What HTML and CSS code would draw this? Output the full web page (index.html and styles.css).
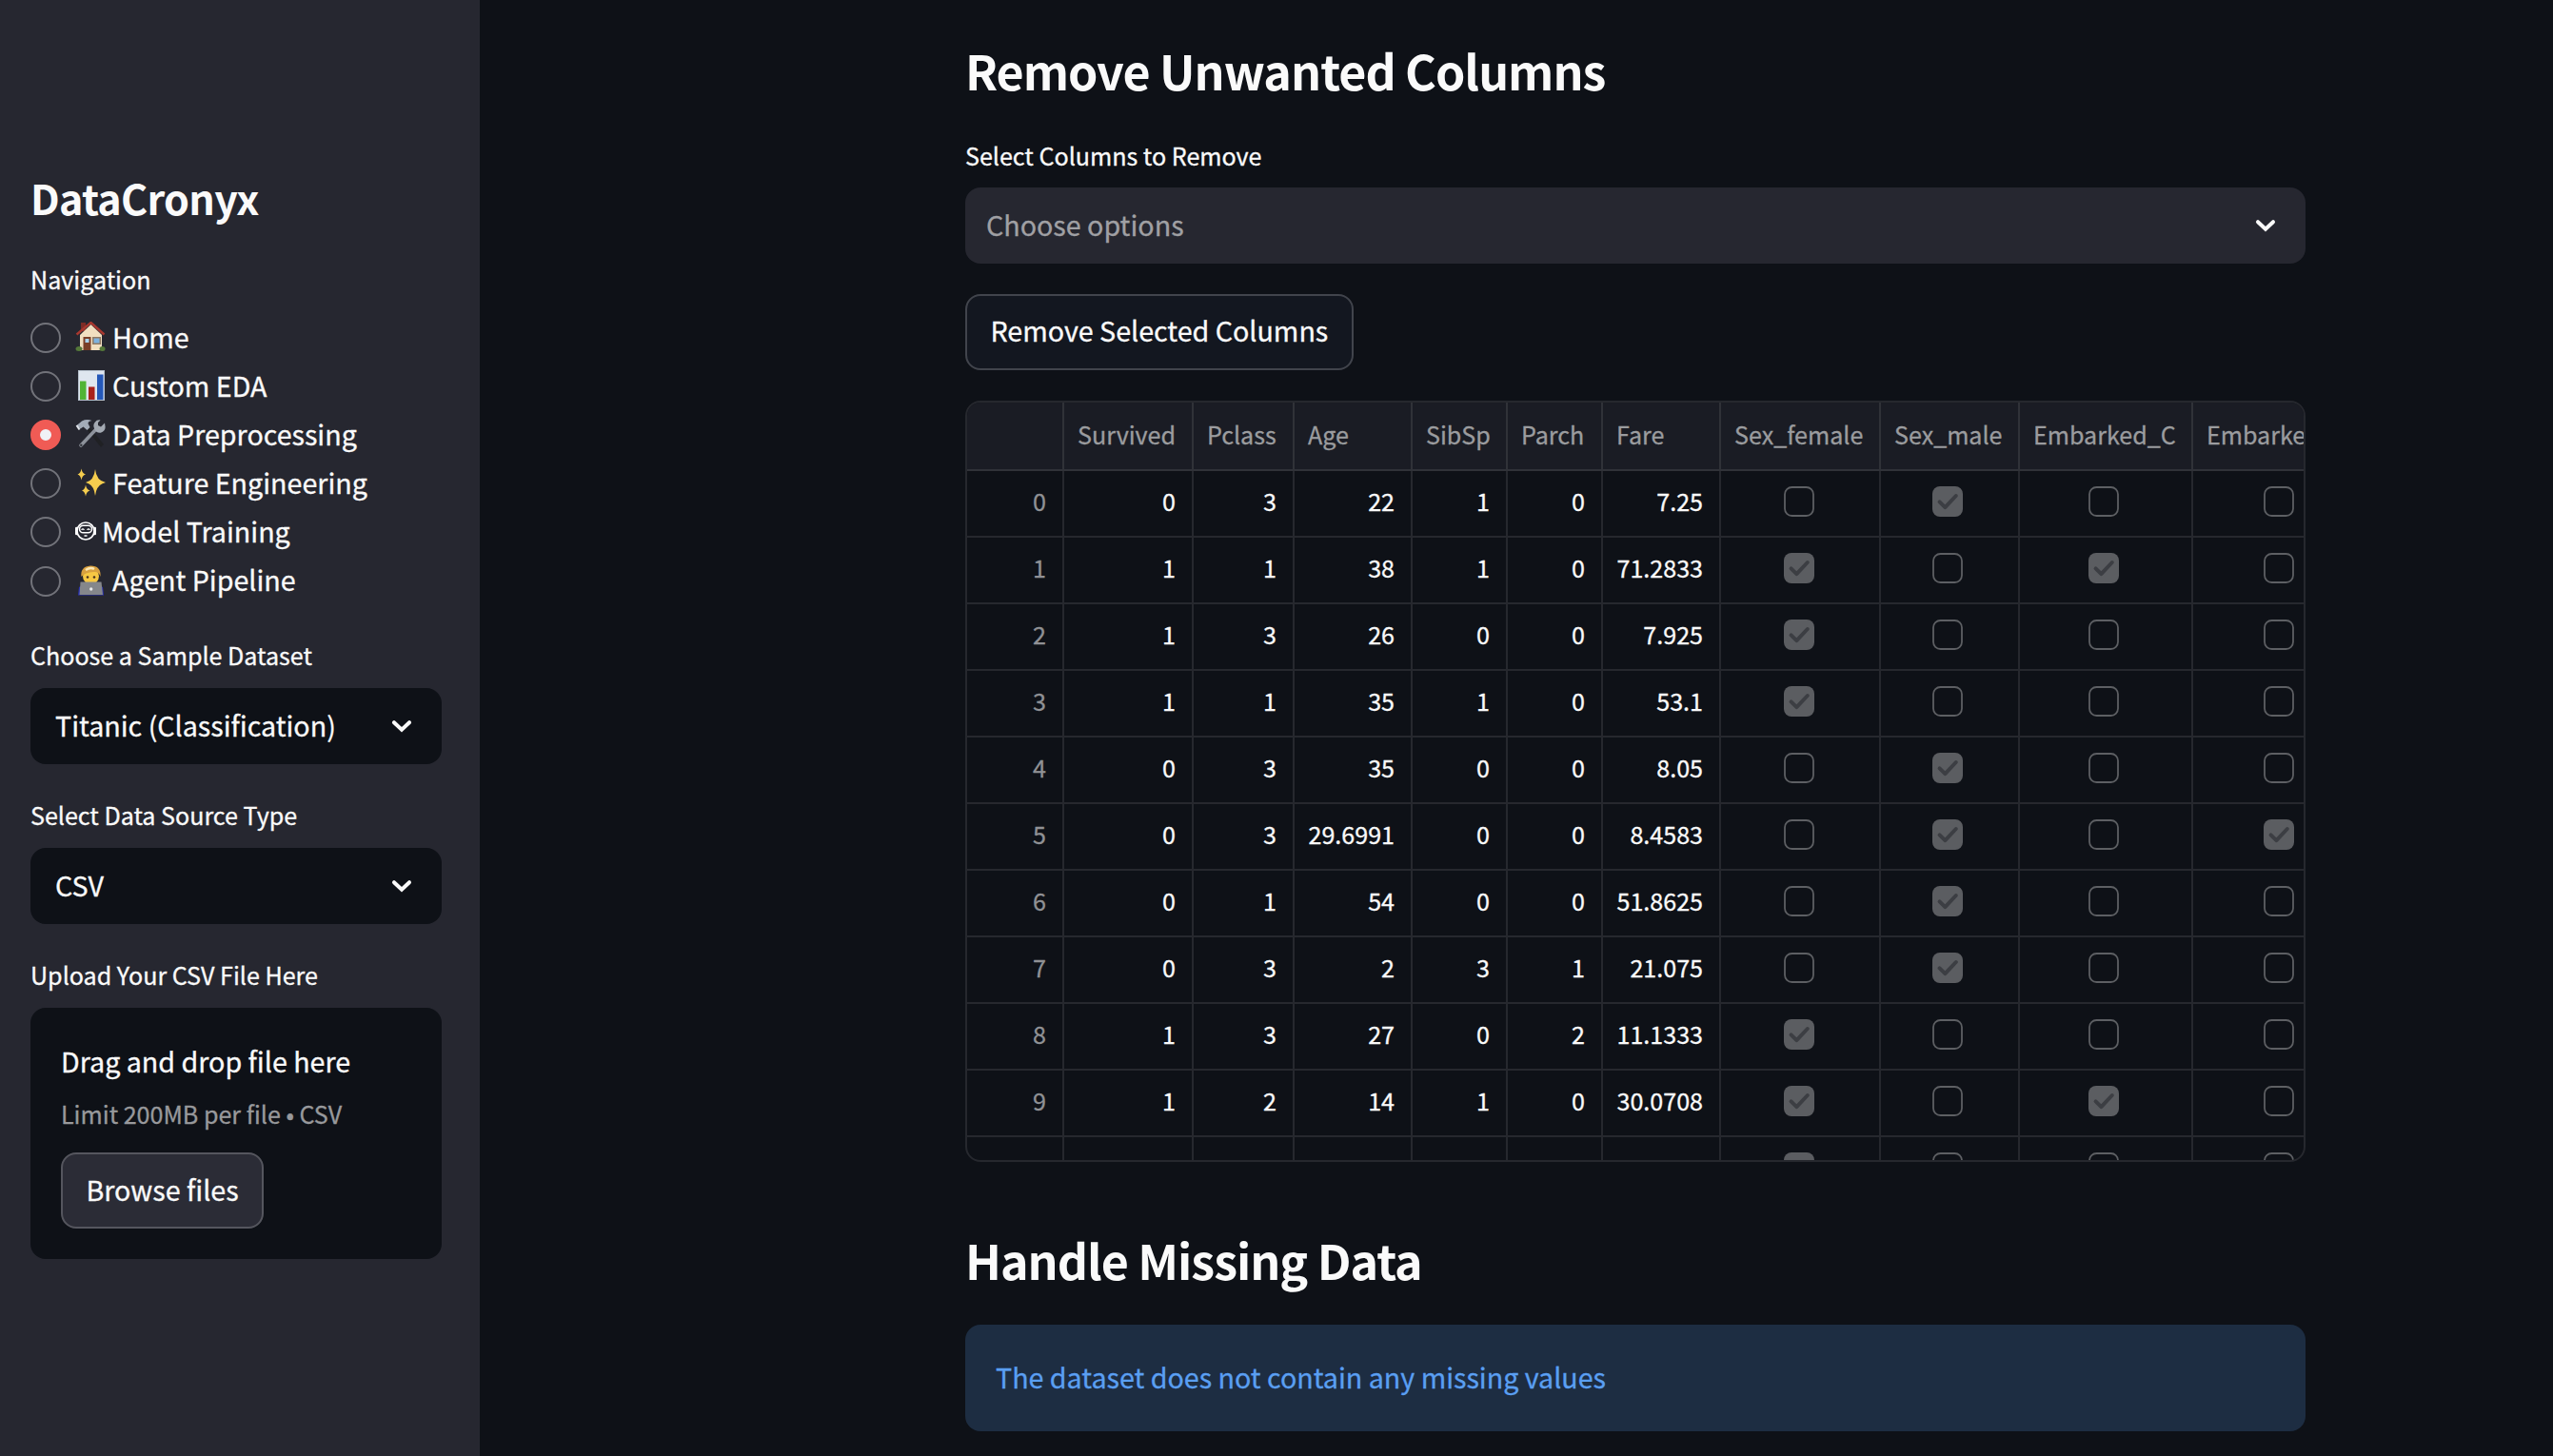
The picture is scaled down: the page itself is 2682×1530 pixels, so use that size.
FILE: index.html
```html
<!DOCTYPE html>
<html lang="en">
<head>
<meta charset="utf-8">
<title>DataCronyx</title>
<link rel="stylesheet" href="styles.css">
</head>
<body>
<svg class="sprite" aria-hidden="true">
  <symbol id="on" viewBox="0 0 32 32"><rect width="32" height="32" rx="8" fill="#5b5d61"/><path d="M7.6 16.4l5.8 5.7L24.8 10" fill="none" stroke="#3c3e43" stroke-width="4" stroke-linecap="round" stroke-linejoin="round"/></symbol>
  <symbol id="off" viewBox="0 0 32 32"><rect x="1" y="1" width="30" height="30" rx="7.5" fill="none" stroke="#5d5f63" stroke-width="1.8"/></symbol>
  <symbol id="chevron" viewBox="0 0 24 16"><path d="M4 4.2l8 7.6 8-7.6" fill="none" stroke="#fafafa" stroke-width="4" stroke-linecap="round"/></symbol>
</svg>
<div class="app">
  <aside class="sidebar">
    <h1 class="brand">DataCronyx</h1>
    <p class="label first">Navigation</p>
    <ul class="nav">
      <li><i class="radio"></i>
        <svg class="emoji" viewBox="0 0 32 32"><path d="M6 1h5v9H6z" fill="#7d2c26"/><path d="M5 14L16.500 3 28 14v16H5z" fill="#f1dfc0"/><path d="M1.500 13.500L16.500 1 30.500 13.500" fill="none" stroke="#a8382f" stroke-width="2.400"/><path d="M8.500 16h8v14h-8z" fill="#7a3f27"/><path d="M10.500 18h4v4h-4z" fill="#a9d4ef"/><path d="M18 16h9v8h-9z" fill="#917a62"/><path d="M19.500 17.500h6v5h-6z" fill="#7db2df"/><ellipse cx="4" cy="28.500" rx="3.500" ry="2.500" fill="#55783a"/><ellipse cx="28.500" cy="28.500" rx="3" ry="2.500" fill="#55783a"/></svg>
        <span>Home</span></li>
      <li><i class="radio"></i>
        <svg class="emoji" viewBox="0 0 32 32"><path d="M3 0h28v32H3z" fill="#b6c0cc"/><path d="M4 1h26v30H4z" fill="#dfe6ef"/><path d="M5 11.500h6.500V31H5z" fill="#51b435"/><path d="M14 17.500h6.500V31H14z" fill="#a9211b"/><path d="M23 4.500h6.500V31H23z" fill="#2558b8"/></svg>
        <span>Custom EDA</span></li>
      <li><i class="radio on"></i>
        <svg class="emoji" viewBox="0 0 32 32"><path d="M12 11l15 19 3-3L15 9z" fill="#202124"/><path d="M6 28L22 11" stroke="#8d929b" stroke-width="3.600" stroke-linecap="round"/><circle cx="6.300" cy="27.700" r="1.200" fill="#33353b"/><path d="M26.500 1.500a6 6 0 0 0-6.500 8.500 5.700 5.700 0 0 0 11.500-2l-.5-3.500-4 4-3-1.500 0-3z" fill="#a3a9b2"/><path d="M1 7.500L7 2.500Q12 0 17.500 2q-4 .5-4 3l2 4-3 3-4-3.500-3 2z" fill="#a2abb8"/><path d="M1.500 7l3 4.500" stroke="#dfe3e8" stroke-width="2"/></svg>
        <span>Data Preprocessing</span></li>
      <li><i class="radio"></i>
        <svg class="emoji" viewBox="0 0 32 32"><path d="M21 2Q22.200 14 32 16 22.200 18 21 30 19.800 18 11 16 19.800 14 21 2z" fill="#f5cd4e"/><path d="M6.500 1.500q.8 5 4.500 6-3.700 1-4.500 6-.8-5-4-6 3.200-1 4-6z" fill="#f5cd4e"/><path d="M11 18.500q.8 5 4.500 6-3.700 1-4.500 6-.8-5-4-6 3.200-1 4-6z" fill="#f5cd4e"/></svg>
        <span>Feature Engineering</span></li>
      <li><i class="radio"></i>
        <svg class="emoji small" viewBox="0 0 22 22"><circle cx="11" cy="11" r="9" fill="none" stroke="#fff" stroke-width="1.700"/><path d="M1.200 8v6M20.800 8v6" stroke="#fff" stroke-width="2.400" stroke-linecap="round"/><rect x="4.500" y="5.200" width="13" height="7.600" rx="3.800" fill="none" stroke="#fff" stroke-width="1.500"/><path d="M6.600 9.800q1.400-2 2.800 0M12.600 9.800q1.400-2 2.800 0" fill="none" stroke="#fff" stroke-width="1.300"/><path d="M9.500 16h3" stroke="#fff" stroke-width="1.500"/></svg>
        <span>Model Training</span></li>
      <li><i class="radio"></i>
        <svg class="emoji" viewBox="0 0 32 32"><path d="M3 31.500l1-8.500 5-3h14l6 3 1 8.500z" fill="#2a33b4"/><circle cx="16.500" cy="11.500" r="8.500" fill="#f7c843"/><path d="M6.500 12Q5 1.500 16 .5 27.500.5 26.500 12q-1.500-5.500-7-5Q10 7.500 6.500 12z" fill="#d9a13f"/><path d="M11 5q5-3.500 9-1" stroke="#fbe7b3" stroke-width="2.500" fill="none"/><circle cx="13" cy="12.500" r="1.300" fill="#46301c"/><circle cx="20" cy="12.500" r="1.300" fill="#46301c"/><path d="M5.500 17.500h22L29 31H4.500z" fill="#85878b"/><circle cx="16.700" cy="25" r="1.700" fill="#e8e9ea"/></svg>
        <span>Agent Pipeline</span></li>
    </ul>
    <p class="label after-nav">Choose a Sample Dataset</p>
    <div class="select"><span>Titanic (Classification)</span><svg class="chevron"><use href="#chevron"/></svg></div>
    <p class="label">Select Data Source Type</p>
    <div class="select"><span>CSV</span><svg class="chevron"><use href="#chevron"/></svg></div>
    <p class="label">Upload Your CSV File Here</p>
    <div class="dropzone">
      <p>Drag and drop file here</p>
      <p class="drop-limit">Limit 200MB per file • CSV</p>
      <button class="button browse">Browse files</button>
    </div>
  </aside>
  <main class="main">
    <h2 class="heading">Remove Unwanted Columns</h2>
    <p class="label">Select Columns to Remove</p>
    <div class="select multi"><span>Choose options</span><svg class="chevron"><use href="#chevron"/></svg></div>
    <button class="button remove">Remove Selected Columns</button>
    <div class="frame">
      <table class="data">
        <colgroup><col class="w102"><col class="w136"><col class="w106"><col class="w124"><col class="w100"><col class="w100"><col class="w124"><col class="w168"><col class="w146"><col class="w182"><col class="w186"></colgroup>
        <thead><tr><th></th><th>Survived</th><th>Pclass</th><th>Age</th><th>SibSp</th><th>Parch</th><th>Fare</th><th>Sex_female</th><th>Sex_male</th><th>Embarked_C</th><th>Embarked_Q</th></tr></thead>
        <tbody>
        <tr><td>0</td><td>0</td><td>3</td><td>22</td><td>1</td><td>0</td><td>7.25</td><td><svg><use href="#off"/></svg></td><td><svg><use href="#on"/></svg></td><td><svg><use href="#off"/></svg></td><td><svg><use href="#off"/></svg></td></tr>
        <tr><td>1</td><td>1</td><td>1</td><td>38</td><td>1</td><td>0</td><td>71.2833</td><td><svg><use href="#on"/></svg></td><td><svg><use href="#off"/></svg></td><td><svg><use href="#on"/></svg></td><td><svg><use href="#off"/></svg></td></tr>
        <tr><td>2</td><td>1</td><td>3</td><td>26</td><td>0</td><td>0</td><td>7.925</td><td><svg><use href="#on"/></svg></td><td><svg><use href="#off"/></svg></td><td><svg><use href="#off"/></svg></td><td><svg><use href="#off"/></svg></td></tr>
        <tr><td>3</td><td>1</td><td>1</td><td>35</td><td>1</td><td>0</td><td>53.1</td><td><svg><use href="#on"/></svg></td><td><svg><use href="#off"/></svg></td><td><svg><use href="#off"/></svg></td><td><svg><use href="#off"/></svg></td></tr>
        <tr><td>4</td><td>0</td><td>3</td><td>35</td><td>0</td><td>0</td><td>8.05</td><td><svg><use href="#off"/></svg></td><td><svg><use href="#on"/></svg></td><td><svg><use href="#off"/></svg></td><td><svg><use href="#off"/></svg></td></tr>
        <tr><td>5</td><td>0</td><td>3</td><td>29.6991</td><td>0</td><td>0</td><td>8.4583</td><td><svg><use href="#off"/></svg></td><td><svg><use href="#on"/></svg></td><td><svg><use href="#off"/></svg></td><td><svg><use href="#on"/></svg></td></tr>
        <tr><td>6</td><td>0</td><td>1</td><td>54</td><td>0</td><td>0</td><td>51.8625</td><td><svg><use href="#off"/></svg></td><td><svg><use href="#on"/></svg></td><td><svg><use href="#off"/></svg></td><td><svg><use href="#off"/></svg></td></tr>
        <tr><td>7</td><td>0</td><td>3</td><td>2</td><td>3</td><td>1</td><td>21.075</td><td><svg><use href="#off"/></svg></td><td><svg><use href="#on"/></svg></td><td><svg><use href="#off"/></svg></td><td><svg><use href="#off"/></svg></td></tr>
        <tr><td>8</td><td>1</td><td>3</td><td>27</td><td>0</td><td>2</td><td>11.1333</td><td><svg><use href="#on"/></svg></td><td><svg><use href="#off"/></svg></td><td><svg><use href="#off"/></svg></td><td><svg><use href="#off"/></svg></td></tr>
        <tr><td>9</td><td>1</td><td>2</td><td>14</td><td>1</td><td>0</td><td>30.0708</td><td><svg><use href="#on"/></svg></td><td><svg><use href="#off"/></svg></td><td><svg><use href="#on"/></svg></td><td><svg><use href="#off"/></svg></td></tr>
        <tr><td></td><td></td><td></td><td></td><td></td><td></td><td></td><td><svg><use href="#on"/></svg></td><td><svg><use href="#off"/></svg></td><td><svg><use href="#off"/></svg></td><td><svg><use href="#off"/></svg></td></tr>
        </tbody>
      </table>
    </div>
    <h2 class="heading second">Handle Missing Data</h2>
    <div class="alert">The dataset does not contain any missing values</div>
  </main>
</div>
</body>
</html>
```
FILE: styles.css
```css
* { box-sizing: border-box; }
body {
  margin: 0;
  background: #0e1117;
  color: #fafafa;
  font: 28.65px/51.2px "Noto Sans CJK JP", "Noto Sans", sans-serif;
  -webkit-text-stroke: 0.3px;
}
h1, h2, p, ul { margin: 0; padding: 0; }
h1, h2 { -webkit-text-stroke: 0; }
.sprite { display: none; }
.app { display: flex; height: 1530px; overflow: hidden; }

.sidebar {
  width: 504px;
  flex: none;
  padding: 178px 40px 0 32px;
  background: #262730;
}
.brand { font-size: 43px; line-height: 58px; font-weight: 700; letter-spacing: -0.7px; }
.label { margin-top: 33px; font-size: 25.08px; line-height: 40px; }
.label.first { margin-top: 37px; }
.label.after-nav { margin-top: 32px; }

.nav { list-style: none; margin-top: 16px; }
.nav li { display: flex; align-items: center; height: 51.2px; }
.nav span { padding-bottom: 3px; }
.radio {
  flex: none;
  width: 32px;
  height: 32px;
  margin-right: 15px;
  border: 2px solid #72737a;
  border-radius: 50%;
}
.radio.on { border: 10px solid #f05b55; background: #f0f2f6; }
.emoji { width: 32px; height: 32px; margin: 0 7px 2px 0; flex: none; }
.emoji.small { width: 22px; height: 22px; margin: 0 6px 2px 0; }

.select {
  display: flex;
  align-items: center;
  justify-content: space-between;
  height: 80px;
  margin-top: 15px;
  padding: 0 30px 0 26px;
  border-radius: 16px;
  background: #0e1117;
}
.select span { padding-bottom: 3px; }
.chevron { width: 24px; height: 16px; }
.select.multi { margin-top: 14px; background: #262730; padding-left: 22px; color: #a0a0a4; }

.dropzone {
  height: 264px;
  margin-top: 15px;
  padding: 30px 32px;
  border-radius: 16px;
  background: #0e1117;
}
.drop-limit { margin-top: 10px; font-size: 25.08px; line-height: 40px; color: #98999c; }
.button {
  display: block;
  height: 80px;
  padding: 0 24.500px 4px;
  border: 2px solid #41444c;
  border-radius: 16px;
  background: #131720;
  color: inherit;
  font: inherit;
}
.browse { margin-top: 21px; background: #2b2c36; border-color: #55565e; }

.main { width: 1408px; margin-left: 510px; padding-top: 33px; }
.heading { font-size: 50.15px; line-height: 80px; font-weight: 700; letter-spacing: -1px; }
.main .label { margin-top: 30px; }
.remove { margin-top: 32px; }

.frame {
  height: 800px;
  margin-top: 32px;
  border: 2px solid #26282e;
  border-radius: 16px;
  overflow: hidden;
}
.data {
  width: 1474px;
  table-layout: fixed;
  border-spacing: 0;
  font-size: 25.08px;
  line-height: 40px;
}
.w100 { width: 100px; } .w102 { width: 102px; } .w106 { width: 106px; }
.w124 { width: 124px; } .w136 { width: 136px; } .w146 { width: 146px; }
.w168 { width: 168px; } .w182 { width: 182px; } .w186 { width: 186px; }
.data th, .data td {
  height: 70px;
  padding: 0 17px 6px 10px;
  border: solid #26282e;
  border-width: 0 2px 2px 0;
  text-align: right;
}
.data th {
  height: 72px;
  padding: 0 10px 4px 14px;
  background: #1a1c24;
  border-color: #303238;
  color: #9b9c9f;
  font-weight: 400;
  text-align: left;
}
.data td:first-child { color: #909195; }
.data td:nth-child(n+8) { padding: 0 4px 4px 0; }
.data td:nth-child(8) { padding-right: 2px; }
.data svg { display: block; width: 32px; height: 32px; margin: 0 auto; }

.second { margin-top: 62px; }
.alert {
  height: 112px;
  margin-top: 29px;
  padding: 29px 32px;
  border-radius: 16px;
  background: #1d2d42;
  color: #5a9ff2;
}
```
